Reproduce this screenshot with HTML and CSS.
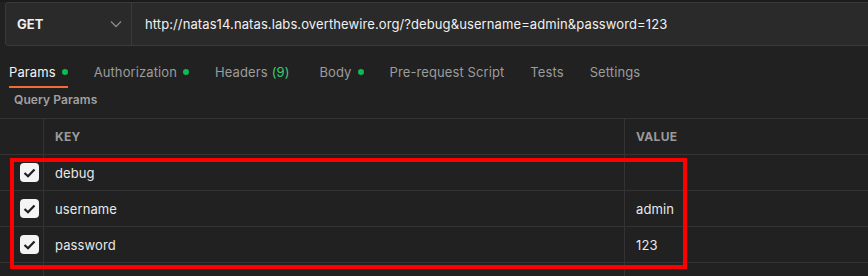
FILE: index.html
```html
<!DOCTYPE html>
<html>
<head>
<meta charset="utf-8">
<link rel="stylesheet" href="styles.css">
</head>
<body>
<div class="urlbar">
  <div class="method">
    <span class="method-name">GET</span>
    <svg class="chev" width="12" height="8" viewBox="0 0 12 8"><path d="M1 1.5 L6 6.5 L11 1.5" fill="none" stroke="#8a8a8a" stroke-width="1.3"/></svg>
  </div>
  <div class="url">http://natas14.natas.labs.overthewire.org/?debug&amp;username=admin&amp;password=123</div>
</div>
<nav class="tabs">
  <div class="tab active">Params<span class="dot"></span></div>
  <div class="tab">Authorization<span class="dot"></span></div>
  <div class="tab tab-wide">Headers <span class="count">(9)</span></div>
  <div class="tab">Body<span class="dot"></span></div>
  <div class="tab">Pre-request Script</div>
  <div class="tab">Tests</div>
  <div class="tab">Settings</div>
</nav>
<div class="section-title">Query Params</div>
<div class="table-wrap">
  <div class="row head">
    <div class="c0"></div>
    <div class="c1">KEY</div>
    <div class="c2">VALUE</div>
  </div>
  <div class="row">
    <div class="c0"><span class="cb"><svg width="13" height="10" viewBox="0 0 13 10"><path d="M1.5 5 L5 8.3 L11.5 1.5" fill="none" stroke="#1e1e1e" stroke-width="2.2"/></svg></span></div>
    <div class="c1">debug</div>
    <div class="c2"></div>
  </div>
  <div class="row">
    <div class="c0"><span class="cb"><svg width="13" height="10" viewBox="0 0 13 10"><path d="M1.5 5 L5 8.3 L11.5 1.5" fill="none" stroke="#1e1e1e" stroke-width="2.2"/></svg></span></div>
    <div class="c1">username</div>
    <div class="c2">admin</div>
  </div>
  <div class="row">
    <div class="c0"><span class="cb"><svg width="13" height="10" viewBox="0 0 13 10"><path d="M1.5 5 L5 8.3 L11.5 1.5" fill="none" stroke="#1e1e1e" stroke-width="2.2"/></svg></span></div>
    <div class="c1">password</div>
    <div class="c2">123</div>
  </div>
  <div class="row">
    <div class="c0"></div>
    <div class="c1"></div>
    <div class="c2"></div>
  </div>
  <div class="highlight"></div>
</div>
</body>
</html>
```
FILE: styles.css
```css
html, body {
  margin: 0;
  padding: 0;
  background: #212121;
  height: 100%;
  overflow: hidden;
}
body {
  font-family: Inter, "Noto Sans", sans-serif;
  font-size: 13px;
  letter-spacing: 0.1px;
  color: #e8e8e8;
  border-top: 2px solid #1b1b1b;
  box-sizing: border-box;
}
.urlbar {
  margin-left: 5px;
  height: 42px;
  display: flex;
  align-items: center;
  background: #2a2a2a;
  border: 1px solid #3a3a3a;
  border-right: none;
  border-radius: 4px 0 0 4px;
}
.method {
  width: 114px;
  height: 100%;
  padding-left: 11px;
  display: flex;
  align-items: center;
  justify-content: space-between;
  border-right: 1px solid #3a3a3a;
}
.method-name {
  font-weight: 700;
  color: #f0f0f0;
  font-size: 13px;
}
.chev {
  margin-right: 9px;
}
.url {
  padding-left: 13px;
  color: #f0f0f0;
  white-space: nowrap;
}
.tabs {
  display: flex;
  gap: 26px;
  padding-left: 9px;
}
.tab {
  display: flex;
  align-items: center;
  padding: 18px 0 6px;
  line-height: 16px;
  color: #9c9c9c;
  border-bottom: 2px solid transparent;
}
.tab-wide {
  margin-right: 4px;
}
.tab.active {
  color: #f4f4f4;
  border-bottom-color: #f26b3a;
}
.dot {
  width: 6px;
  height: 6px;
  border-radius: 50%;
  background: #0cbb52;
  margin-left: 6px;
}
.count {
  color: #3dc972;
  margin-left: 4px;
}
.section-title {
  margin: 4px 0 0 14px;
  line-height: 16px;
  font-weight: 600;
  font-size: 12px;
  color: #a0a0a0;
}
.table-wrap {
  position: relative;
  margin-top: 10px;
  border-top: 1px solid #333333;
}
.row {
  display: grid;
  grid-template-columns: 44px 581px 1fr;
  height: 35px;
  border-bottom: 1px solid #333333;
}
.row > div {
  display: flex;
  align-items: center;
  padding-left: 11px;
}
.row > .c0 {
  border-right: 1px solid #333333;
  padding-left: 20px;
}
.row > .c1 {
  border-right: 1px solid #333333;
}
.head > div {
  font-size: 12px;
  font-weight: 700;
  color: #9a9a9a;
  letter-spacing: 0.3px;
}
.cb {
  width: 19px;
  height: 19px;
  border-radius: 4px;
  background: #f4f4f4;
  display: flex;
  align-items: center;
  justify-content: center;
}
.highlight {
  position: absolute;
  left: 10px;
  top: 39px;
  width: 669px;
  height: 103px;
  border: 4px solid #ff0000;
}
```
